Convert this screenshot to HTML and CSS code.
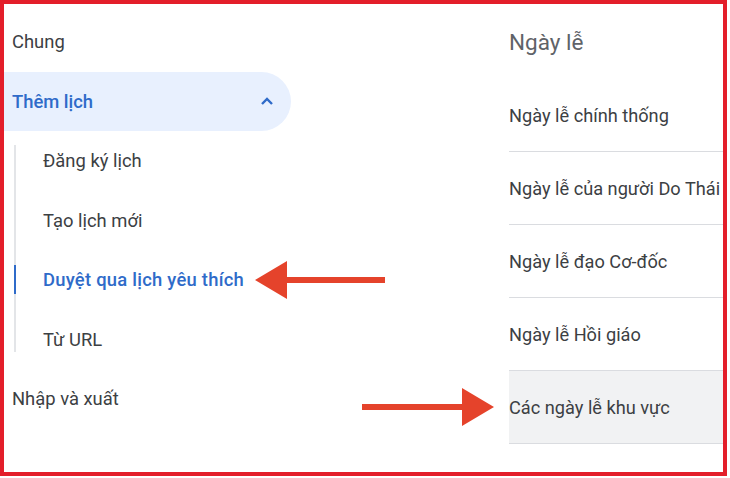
FILE: index.html
```html
<!DOCTYPE html>
<html lang="vi">
<head>
    <meta charset="UTF-8">
    <meta name="viewport" content="width=device-width, initial-scale=1.0">
    <title>Cài đặt lịch</title>
    <link rel="stylesheet" href="styles.css">
</head>
<body>

    <div class="frame">
        <!-- Settings navigation -->
        <nav class="side-nav">
            <div class="nav-item">Chung</div>
            <div class="nav-item nav-open">
                <span>Thêm lịch</span>
                <svg class="chevron" width="14" height="10" viewBox="0 0 14 10">
                    <path d="M2 8 L7 3 L12 8" fill="none" stroke="currentColor" stroke-width="2.4"/>
                </svg>
            </div>
            <div class="sub-list">
                <div class="sub-item">Đăng ký lịch</div>
                <div class="sub-item">Tạo lịch mới</div>
                <div class="sub-item active">Duyệt qua lịch yêu thích</div>
                <div class="sub-item">Từ URL</div>
            </div>
            <div class="nav-item">Nhập và xuất</div>
        </nav>

        <!-- Holidays panel -->
        <section class="holidays">
            <h2>Ngày lễ</h2>
            <div class="holiday-row">Ngày lễ chính thống</div>
            <div class="holiday-row">Ngày lễ của người Do Thái</div>
            <div class="holiday-row">Ngày lễ đạo Cơ-đốc</div>
            <div class="holiday-row">Ngày lễ Hồi giáo</div>
            <div class="holiday-row hovered">Các ngày lễ khu vực</div>
        </section>

        <!-- Annotation arrows -->
        <svg class="arrow arrow-left" width="132" height="38" viewBox="0 0 132 38">
            <polygon points="0,19 32,0 32,16 130,16 130,22 32,22 32,38"/>
        </svg>
        <svg class="arrow arrow-right" width="132" height="38" viewBox="0 0 132 38">
            <polygon points="132,19 100,0 100,16 0,16 0,22 100,22 100,38"/>
        </svg>
    </div>

</body>
</html>
```

FILE: styles.css
```css
body {
    margin: 0;
    padding: 0;
    background: white;
    font-family: Roboto, 'Noto Sans', sans-serif;
}

.frame {
    position: relative;
    width: 727px;
    height: 476px;
    box-sizing: border-box;
    border: 4px solid #e31e2a;
    display: flex;
    justify-content: space-between;
    overflow: hidden;
}

.side-nav {
    width: 287px;
    padding-top: 8px;
}

.nav-item {
    height: 59.5px;
    display: flex;
    align-items: center;
    padding-left: 8px;
    font-size: 18.4px;
    color: #3c4043;
}

.nav-open {
    justify-content: space-between;
    padding-right: 17px;
    background-color: #e8f0fe;
    border-radius: 0 30px 30px 0;
    color: #2f6bc9;
    font-weight: 500;
}

.chevron {
    color: #2f6bc9;
}

.sub-list {
    position: relative;
    margin-left: 10px;
}

.sub-list::before {
    content: "";
    position: absolute;
    left: 0;
    top: 14px;
    bottom: 17px;
    width: 2px;
    background-color: #e3e5e8;
}

.sub-item {
    position: relative;
    height: 59.5px;
    display: flex;
    align-items: center;
    padding-left: 29px;
    font-size: 18.4px;
    color: #3c4043;
}

.sub-item.active {
    color: #2f6bc9;
    font-weight: 500;
    letter-spacing: 0.25px;
}

.sub-item.active::before {
    content: "";
    position: absolute;
    left: 0;
    top: 15px;
    bottom: 16px;
    width: 2px;
    background-color: #2f6bc9;
}

.holidays {
    width: 214px;
}

.holidays h2 {
    margin: 0;
    height: 75px;
    display: flex;
    align-items: center;
    font-size: 22.5px;
    font-weight: 400;
    color: #5f6368;
}

.holiday-row {
    height: 73px;
    box-sizing: border-box;
    display: flex;
    align-items: center;
    border-bottom: 1px solid #dadce0;
    font-size: 18.2px;
    color: #3c4043;
    white-space: nowrap;
}

.holiday-row.hovered {
    background-color: #f1f2f3;
}

.arrow {
    position: absolute;
    fill: #e5432b;
}

.arrow-left {
    left: 251px;
    top: 257px;
}

.arrow-right {
    left: 358px;
    top: 384px;
}
```
